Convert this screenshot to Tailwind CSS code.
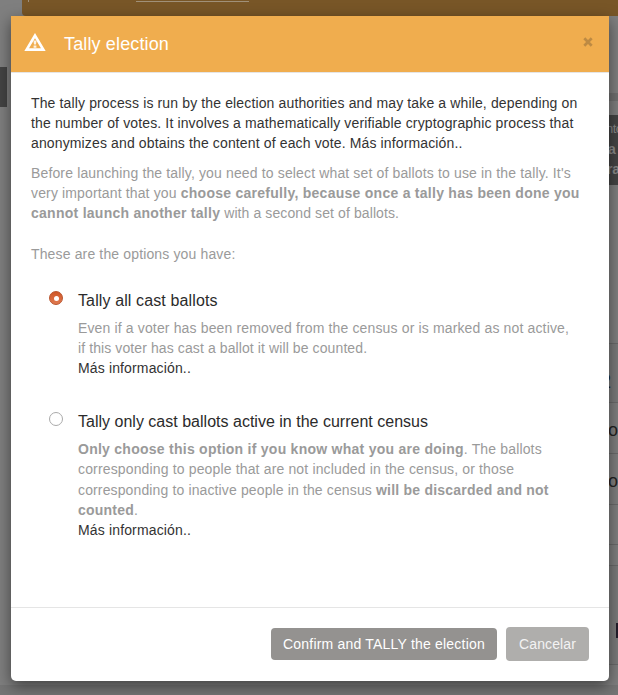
<!DOCTYPE html>
<html lang="es">
<head>
<meta charset="utf-8">
<title>Tally election</title>
<script src="https://cdn.jsdelivr.net/npm/@tailwindcss/browser@4"></script>
</head>
<body class="relative h-[695px] w-[618px] overflow-hidden bg-[#7f7f7f] font-['Liberation_Sans',Arial,sans-serif] text-[14px] leading-[20px]">
  <!-- Dimmed page behind the dialog -->
  <div class="absolute inset-0" aria-hidden="true">
    <div class="absolute left-[22px] top-0 h-[16px] w-[596px] rounded-bl bg-[#785627]"></div>
    <div class="absolute left-[136px] top-[1px] h-px w-[113px] bg-[#a09078]"></div>
    <div class="absolute left-[28px] top-0 h-[2px] w-px bg-[#a09078]"></div>
    <div class="absolute left-0 top-[67px] h-[40px] w-[7px] bg-[#444]"></div>
    <div class="absolute left-[600px] top-[93px] h-[8px] w-[18px] bg-[#707070]"></div>
    <div class="absolute left-[600px] top-[115px] h-[70px] w-[18px] overflow-hidden bg-[#444] pl-[8px] pt-[4px] text-[14px] text-[#8a8a8a]">
      <div class="-ml-[2px] text-[13px] tracking-[-0.6px]">nto</div><div class="font-bold">a</div><div class="-ml-px font-bold tracking-[-0.3px]">ra</div>
    </div>
    <div class="absolute left-[600px] top-[343px] h-[60px] w-[18px] border-t border-[#6b6b6b] bg-[#7b7b7b]"></div>
    <div class="absolute left-[600px] top-[371px] text-[20px] text-[#1b2a35]">2</div>
    <div class="absolute left-[600px] top-[402px] h-[52px] w-[18px] border-y border-[#6b6b6b]"></div>
    <div class="absolute left-[608px] top-[420px] text-[18px] text-[#222]">o</div>
    <div class="absolute left-[608px] top-[471px] text-[18px] text-[#222]">o</div>
    <div class="absolute left-[600px] top-[504px] h-[41px] w-[18px] border-y border-[#6b6b6b]"></div>
    <div class="absolute left-[600px] top-[565px] h-[100px] w-[18px] border-y border-[#6b6b6b] bg-[#7b7b7b]"></div>
    <div class="absolute left-[616px] top-[623px] h-[15px] w-[2px] bg-[#241e2b]"></div>
    <div class="absolute left-0 top-[685px] h-[10px] w-[618px] bg-[#757575]"></div>
  </div>

  <section role="dialog" aria-labelledby="title" class="relative ml-[11px] mt-[16px] flex h-[665px] w-[598px] flex-col rounded-b-[5px] bg-white shadow-[0_5px_15px_rgba(0,0,0,0.5)]">
    <header class="flex h-[57px] shrink-0 items-center border-b border-[#e5e5e5] bg-[#f0ad4e] pl-[13px] pr-[15px] text-white">
      <svg class="mb-[3px] h-[19px] w-[22px]" viewBox="0 0 22 19" fill="none">
        <path d="M11 2.6 L19.3 16.6 H2.7 Z" stroke="currentColor" stroke-width="2.7"/>
        <path d="M9.5 7.4h3l-.5 4.2h-2zM9.6 12.5h2.8v2.3H9.6z" fill="currentColor" fill-opacity=".85"/>
      </svg>
      <h1 id="title" class="ml-[18px] text-[18px] leading-[26px] tracking-[0.14px]">Tally election</h1>
      <button class="mb-[4px] ml-auto mr-[1px]" aria-label="Cerrar">
        <svg class="h-[10px] w-[10px]" viewBox="0 0 10 10"><path d="M1.3 1.3 8.7 8.7M8.7 1.3 1.3 8.7" stroke="#bd8a43" stroke-width="2.7"/></svg>
      </button>
    </header>

    <div class="grow whitespace-nowrap px-[20px] pt-[20px] tracking-[0.143px] text-[#9a9a9a]">
      <p class="text-[#333] tracking-[0.135px]">The tally process is run by the election authorities and may take a while, depending on<br>the number of votes. It involves a mathematically verifiable cryptographic process that<br>anonymizes and obtains the content of each vote. <a>Más información..</a></p>
      <p class="mt-[10px]">Before launching the tally, you need to select what set of ballots to use in the tally. It's<br>very important that you <b class="tracking-[0.265px]">choose carefully, because once a tally has been done you<br>cannot launch another tally</b><span class="tracking-[0.1px]"> with a second set of ballots.</span></p>
      <p class="mt-[21px]">These are the options you have:</p>

      <div class="mt-[27px] flex">
        <span class="ml-[18px] flex h-[14px] w-[14px] items-center justify-center rounded-full border border-[#b9532c] bg-linear-to-b from-[#cf5626] to-[#e07a50]"><span class="h-[5px] w-[5px] rounded-full bg-white"></span></span>
        <div class="ml-[15px]">
          <h2 class="text-[16px] leading-[20px] tracking-[0.12px] text-[#2b2b2b]">Tally all cast ballots</h2>
          <p class="mt-[7px]">Even if a voter has been removed from the census or is marked as not active,<br><span class="tracking-[0.1px]">if this voter has cast a ballot it will be counted.</span><br><a class="text-[#333]">Más información..</a></p>
        </div>
      </div>

      <div class="mt-[34px] flex">
        <span class="ml-[18px] h-[14px] w-[14px] rounded-full border border-[#aaa] bg-white"></span>
        <div class="ml-[15px]">
          <h2 class="text-[16px] leading-[20px] tracking-[0.01px] text-[#2b2b2b]">Tally only cast ballots active in the current census</h2>
          <p class="mt-[7px] leading-[20.25px] tracking-[0.15px]"><b class="tracking-[0.26px]">Only choose this option if you know what you are doing</b>. The ballots<br>corresponding to people that are not included in the census, or those<br><span class="tracking-[0.13px]">corresponding to inactive people in the census </span><b class="tracking-[0.22px]">will be discarded and not<br>counted</b>.<br><a class="text-[#333]">Más información..</a></p>
        </div>
      </div>
    </div>

    <footer class="flex h-[74px] shrink-0 items-center justify-end gap-[9px] border-t border-[#e5e5e5] pb-[2px] pr-[20px] text-white">
      <button class="h-[32px] w-[226px] whitespace-nowrap rounded-[4px] bg-[#949290] tracking-[0.2px]">Confirm and TALLY the election</button>
      <button class="h-[34px] w-[83px] rounded-[4px] bg-[#afaeac] tracking-[0.12px] text-[#f3f3f3]">Cancelar</button>
    </footer>
  </section>
</body>
</html>
